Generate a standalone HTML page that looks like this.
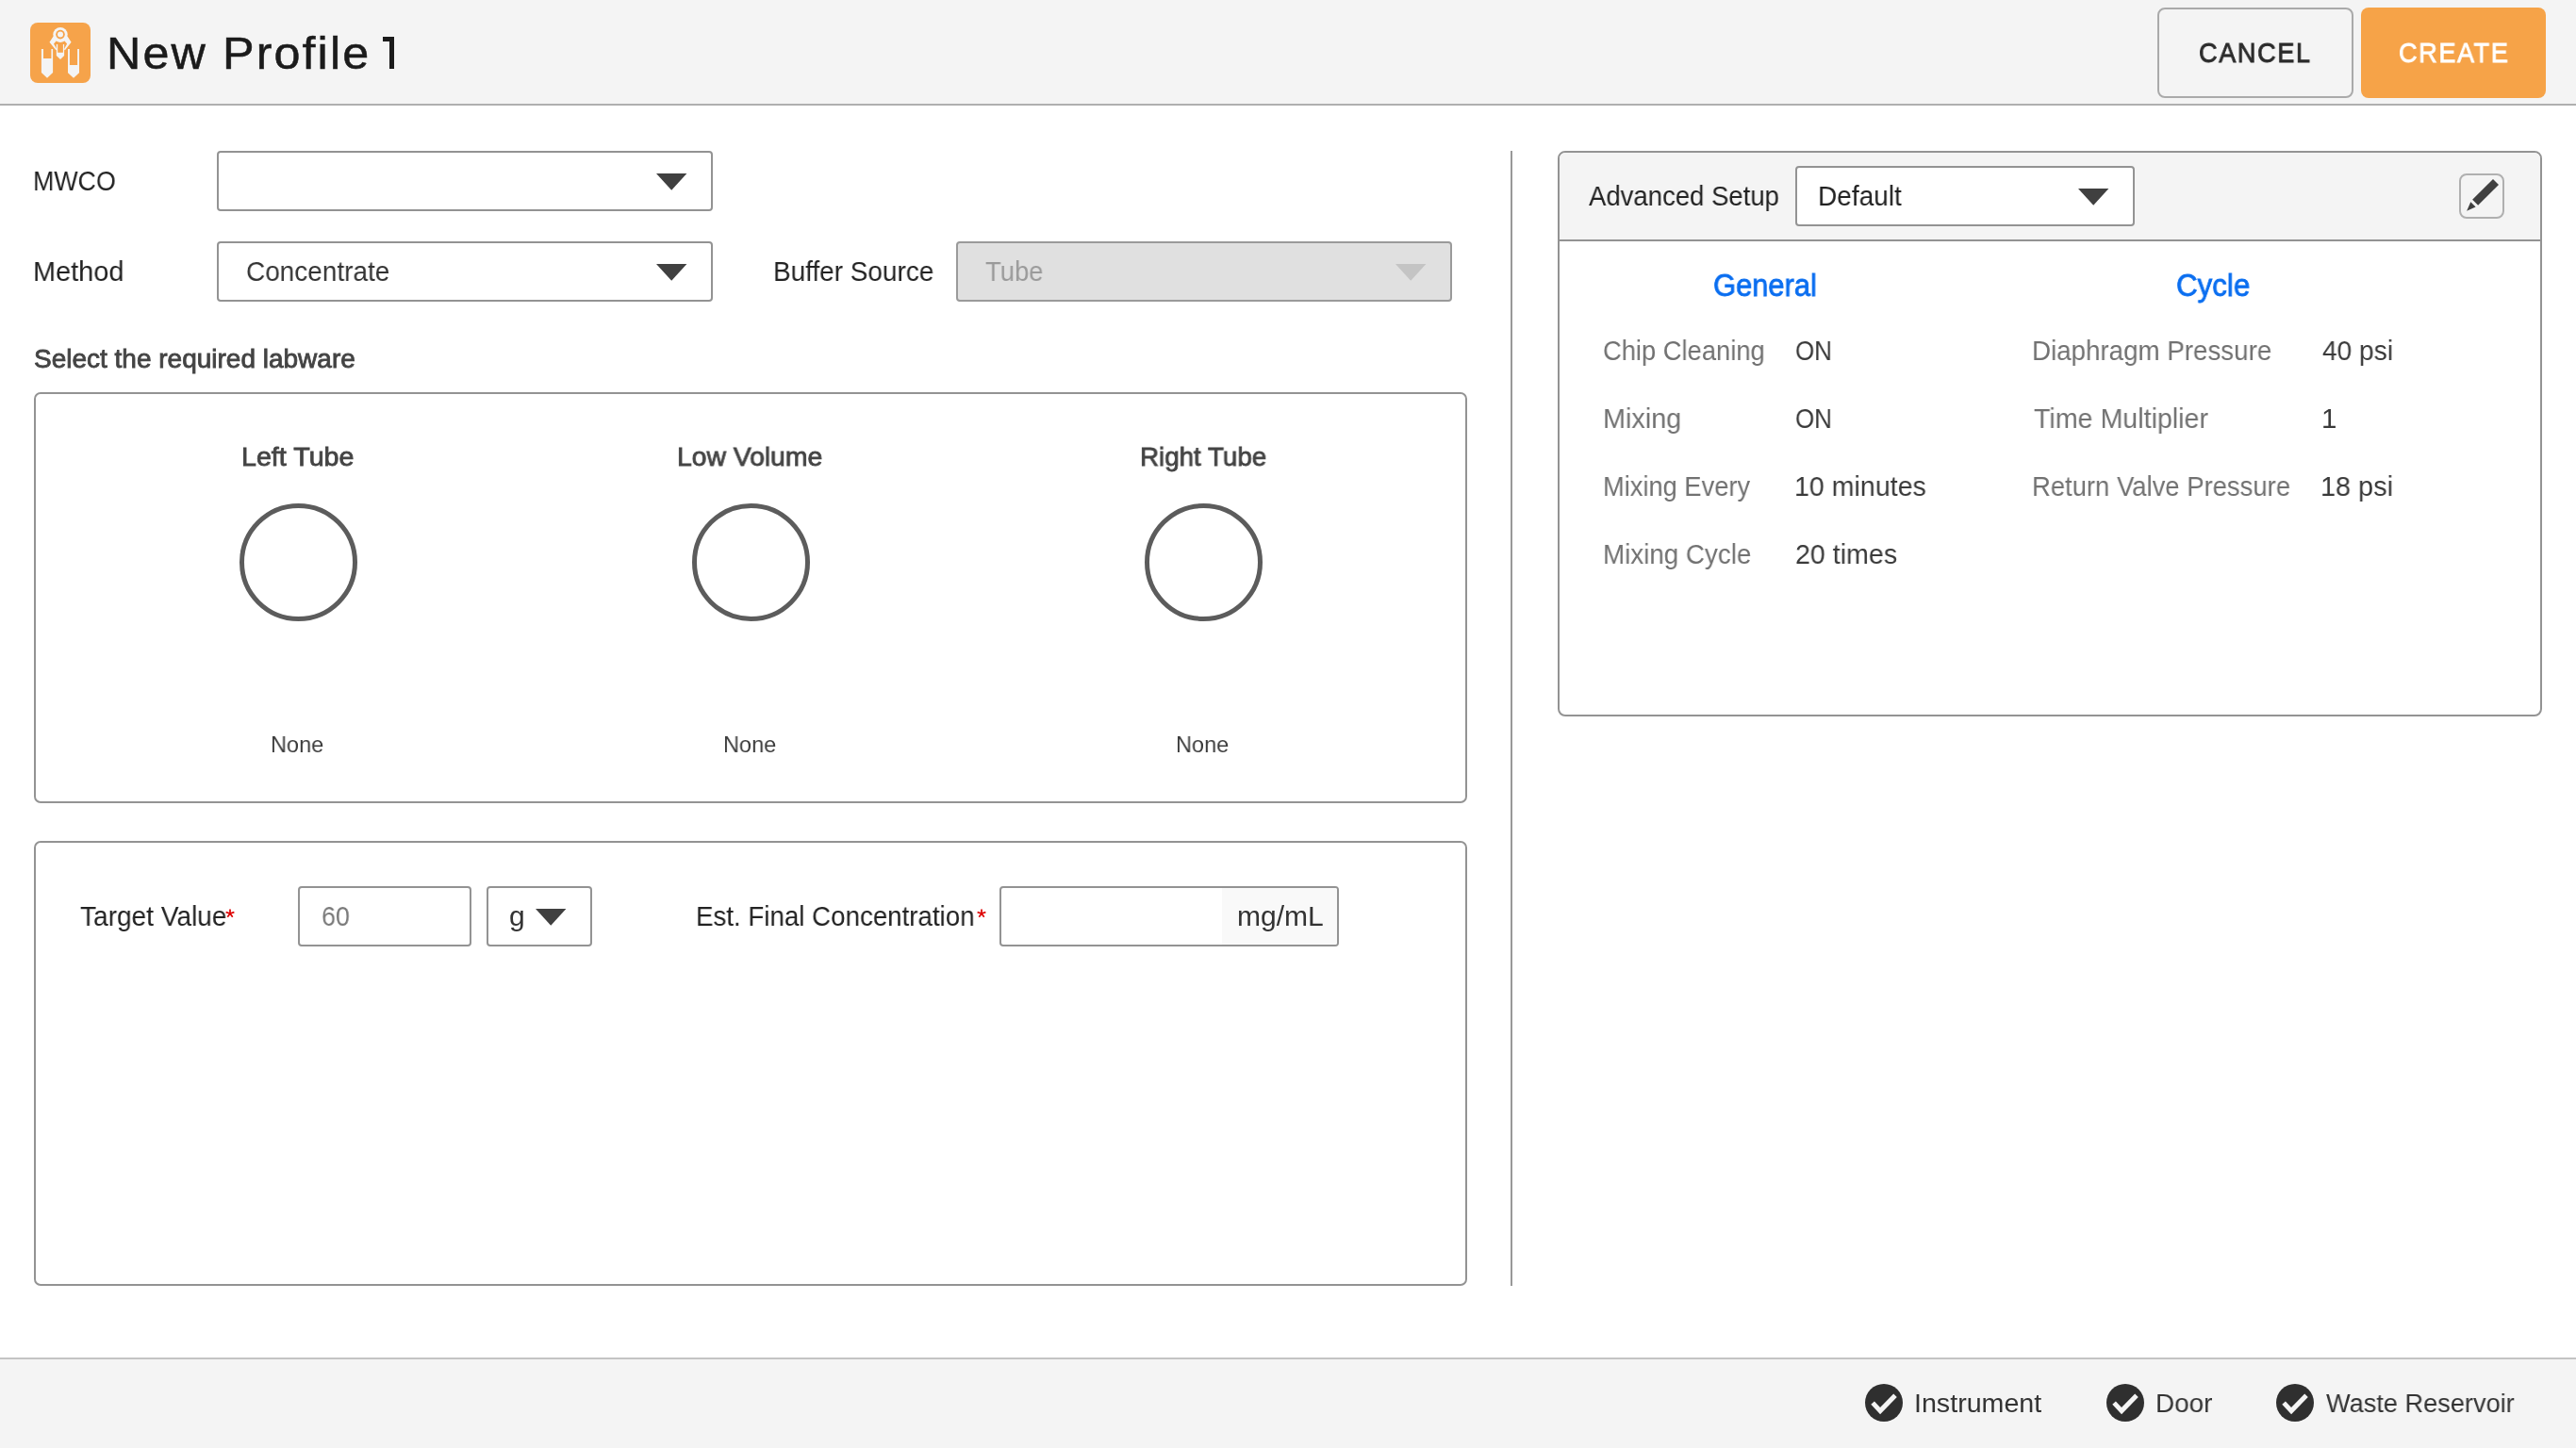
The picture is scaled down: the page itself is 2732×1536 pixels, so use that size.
<!DOCTYPE html>
<html><head><meta charset="utf-8">
<style>
*{box-sizing:border-box;margin:0;padding:0}
html,body{width:2732px;height:1536px;overflow:hidden;background:#fff;font-family:"Liberation Sans",sans-serif;position:relative}
.a{position:absolute}
.t{position:absolute;white-space:nowrap;line-height:1;transform-origin:0 0;will-change:transform}
.pb{display:inline-block;width:0;height:0;vertical-align:baseline}
.box{position:absolute;border:2px solid #939393;border-radius:4px;background:#fff}
</style></head>
<body>
<div class="a" style="left:0;top:0;width:2732px;height:110px;background:#f4f4f4"></div>
<div class="a" style="left:0;top:110px;width:2732px;height:2px;background:#afafaf"></div>
<svg class="a" style="left:32px;top:24px" width="64" height="64" viewBox="0 0 64 64"><rect x="0" y="0" width="64" height="64" rx="8" fill="#f6a34a"/><g fill="#f4f4f4"><path d="M11.9 28 V53 L18 58.8 L24.1 53 V28 H22.4 V37.9 H14 V28 Z"/><path d="M40 28 V53.2 L46 58.8 L52 53.2 V28 H50.1 V45 H41.9 V28 Z"/><path d="M27.8 23 V35.1 L32 38.9 L36.1 35.1 V23 H34.9 V31.8 H29.2 V23 Z"/><path d="M24.6 14.5 L20.5 20.8 L27.3 29.2 L28.3 28.2 L25 22.4 L27.6 19.6 Q32 22.2 36.5 19.6 L39.1 22.4 L35.9 28.2 L36.9 29.2 L43.6 20.8 L39.5 14.5 Z"/><circle cx="32" cy="12.6" r="7.7"/></g><circle cx="32" cy="12.6" r="4.8" fill="#f6a34a"/><circle cx="32" cy="12.6" r="3" fill="#f4f4f4"/></svg>
<div class="a" style="left:2288px;top:8px;width:208px;height:96px;border:2px solid #aaaaaa;border-radius:8px;background:#f4f4f4"></div>
<div class="a" style="left:2504px;top:8px;width:196px;height:96px;border-radius:8px;background:#f6a348"></div>
<div class="a" style="left:405.6px;top:39.2px;width:12.2px;height:4.4px;background:#1b1b1b"></div>
<div class="a" style="left:413.2px;top:39.2px;width:4.6px;height:33.8px;background:#1b1b1b"></div>
<div class="box" style="left:230px;top:160px;width:526px;height:64px"></div>
<svg class="a" style="left:695.9px;top:183.9px" width="33.4" height="18.8" viewBox="0 0 33.4 18.8"><polygon points="0,0 32.4,0 16.2,17.8" fill="#404040"/></svg>
<div class="box" style="left:230px;top:256px;width:526px;height:64px"></div>
<svg class="a" style="left:695.9px;top:279.9px" width="33.4" height="18.8" viewBox="0 0 33.4 18.8"><polygon points="0,0 32.4,0 16.2,17.8" fill="#404040"/></svg>
<div class="box" style="left:1014px;top:256px;width:526px;height:64px;background:#e0e0e0;border-color:#9a9a9a"></div>
<svg class="a" style="left:1479.5px;top:279.9px" width="33.4" height="18.8" viewBox="0 0 33.4 18.8"><polygon points="0,0 32.4,0 16.2,17.8" fill="#c4c4c4"/></svg>
<div class="box" style="left:36px;top:416px;width:1520px;height:436px;border-radius:7px"></div>
<div class="a" style="left:253.5px;top:533.5px;width:125px;height:125px;border:5px solid #5c5c5c;border-radius:50%"></div>
<div class="a" style="left:733.5px;top:533.5px;width:125px;height:125px;border:5px solid #5c5c5c;border-radius:50%"></div>
<div class="a" style="left:1213.5px;top:533.5px;width:125px;height:125px;border:5px solid #5c5c5c;border-radius:50%"></div>
<div class="box" style="left:36px;top:892px;width:1520px;height:472px;border-radius:7px"></div>
<div class="box" style="left:316px;top:940px;width:184px;height:64px"></div>
<div class="box" style="left:516px;top:940px;width:112px;height:64px"></div>
<svg class="a" style="left:567.7px;top:963.9px" width="33.4" height="18.8" viewBox="0 0 33.4 18.8"><polygon points="0,0 32.4,0 16.2,17.8" fill="#404040"/></svg>
<div class="box" style="left:1060px;top:940px;width:360px;height:64px;overflow:hidden"><div class="a" style="left:234px;top:0;width:124px;height:60px;background:#f9f9f9"></div></div>
<div class="a" style="left:1602px;top:160px;width:2px;height:1204px;background:#999999"></div>
<div class="box" style="left:1652px;top:160px;width:1044px;height:600px;border-radius:8px;overflow:hidden"><div class="a" style="left:0;top:0;width:1040px;height:94px;background:#f4f4f4;border-bottom:2px solid #939393"></div></div>
<div class="box" style="left:1904px;top:176px;width:360px;height:64px"></div>
<svg class="a" style="left:2204px;top:200px" width="33.4" height="18.8" viewBox="0 0 33.4 18.8"><polygon points="0,0 32.4,0 16.2,17.8" fill="#404040"/></svg>
<div class="a" style="left:2608px;top:184px;width:48px;height:48px;border:2px solid #b0b0b0;border-radius:8px;background:#f4f4f4"></div>
<svg class="a" style="left:2600px;top:176px" width="64" height="64" viewBox="0 0 64 64"><g fill="#404040"><polygon points="44,14.1 50,20.1 28.1,41.8 22.1,35.8"/><polygon points="20.3,38.2 25.6,43.5 16.1,47.7"/></g></svg>
<svg class="a" style="left:234.3px;top:958.6px" width="20" height="20" viewBox="0 0 20 20"><g stroke="#dd0000" stroke-width="1.7" stroke-linecap="butt"><line x1="10" y1="10" x2="10.00" y2="5.40"/><line x1="10" y1="10" x2="14.37" y2="8.58"/><line x1="10" y1="10" x2="12.70" y2="13.72"/><line x1="10" y1="10" x2="7.30" y2="13.72"/><line x1="10" y1="10" x2="5.63" y2="8.58"/></g></svg>
<svg class="a" style="left:1031.2px;top:958.6px" width="20" height="20" viewBox="0 0 20 20"><g stroke="#dd0000" stroke-width="1.7" stroke-linecap="butt"><line x1="10" y1="10" x2="10.00" y2="5.40"/><line x1="10" y1="10" x2="14.37" y2="8.58"/><line x1="10" y1="10" x2="12.70" y2="13.72"/><line x1="10" y1="10" x2="7.30" y2="13.72"/><line x1="10" y1="10" x2="5.63" y2="8.58"/></g></svg>
<div class="a" style="left:0;top:1440px;width:2732px;height:96px;background:#f4f4f4;border-top:2px solid #c4c4c4"></div>
<div class="a" style="left:1978px;top:1468px;width:40px;height:40px;border-radius:50%;background:#2f2f2f"></div><svg class="a" style="left:1978px;top:1468px" width="40" height="40" viewBox="0 0 40 40"><polyline points="8.1,20.1 16.1,28.6 32,12.2" fill="none" stroke="#f4f4f4" stroke-width="5"/></svg>
<div class="a" style="left:2234px;top:1468px;width:40px;height:40px;border-radius:50%;background:#2f2f2f"></div><svg class="a" style="left:2234px;top:1468px" width="40" height="40" viewBox="0 0 40 40"><polyline points="8.1,20.1 16.1,28.6 32,12.2" fill="none" stroke="#f4f4f4" stroke-width="5"/></svg>
<div class="a" style="left:2414px;top:1468px;width:40px;height:40px;border-radius:50%;background:#2f2f2f"></div><svg class="a" style="left:2414px;top:1468px" width="40" height="40" viewBox="0 0 40 40"><polyline points="8.1,20.1 16.1,28.6 32,12.2" fill="none" stroke="#f4f4f4" stroke-width="5"/></svg>
<div class="t" id="title" style="left:113.36px;top:33.00px;font-size:48px;color:#1b1b1b;transform:scaleX(1.0479);-webkit-text-stroke:0.5px #1b1b1b;letter-spacing:2px"><i class="pb"></i>New Profile</div>
<div class="t" id="cancel" style="left:2332.20px;top:41.00px;font-size:30px;color:#2b2b2b;transform:scaleX(0.9031);-webkit-text-stroke:0.85px #2b2b2b;letter-spacing:1.8px"><i class="pb"></i>CANCEL</div>
<div class="t" id="create" style="left:2544.10px;top:41.00px;font-size:30px;color:#ffffff;transform:scaleX(0.9016);-webkit-text-stroke:0.85px #ffffff;letter-spacing:1.8px"><i class="pb"></i>CREATE</div>
<div class="t" id="mwco" style="left:35.31px;top:177.00px;font-size:30px;color:#222222;transform:scaleX(0.8926)"><i class="pb"></i>MWCO</div>
<div class="t" id="method" style="left:35.17px;top:273.00px;font-size:30px;color:#222222;transform:scaleX(0.9629)"><i class="pb"></i>Method</div>
<div class="t" id="conc" style="left:261.17px;top:273.00px;font-size:30px;color:#333333;transform:scaleX(0.9317)"><i class="pb"></i>Concentrate</div>
<div class="t" id="buf" style="left:819.94px;top:273.00px;font-size:30px;color:#222222;transform:scaleX(0.9311)"><i class="pb"></i>Buffer Source</div>
<div class="t" id="tube" style="left:1044.90px;top:273.00px;font-size:30px;color:#9a9a9a;transform:scaleX(0.9136)"><i class="pb"></i>Tube</div>
<div class="t" id="select" style="left:36.29px;top:367.00px;font-size:27.8px;color:#444444;transform:scaleX(1.0071);-webkit-text-stroke:0.85px #444444"><i class="pb"></i>Select the required labware</div>
<div class="t" id="lt" style="left:255.89px;top:470.00px;font-size:28.5px;color:#444444;transform:scaleX(1.0052);-webkit-text-stroke:0.85px #444444"><i class="pb"></i>Left Tube</div>
<div class="t" id="lv" style="left:718.41px;top:470.00px;font-size:28.5px;color:#444444;transform:scaleX(0.9928);-webkit-text-stroke:0.85px #444444"><i class="pb"></i>Low Volume</div>
<div class="t" id="rt" style="left:1208.95px;top:470.00px;font-size:28.5px;color:#444444;transform:scaleX(0.9733);-webkit-text-stroke:0.85px #444444"><i class="pb"></i>Right Tube</div>
<div class="t" id="n1" style="left:287.47px;top:778.00px;font-size:24.4px;color:#3c3c3c;transform:scaleX(0.9643)"><i class="pb"></i>None</div>
<div class="t" id="n2" style="left:767.47px;top:778.00px;font-size:24.4px;color:#3c3c3c;transform:scaleX(0.9643)"><i class="pb"></i>None</div>
<div class="t" id="n3" style="left:1247.47px;top:778.00px;font-size:24.4px;color:#3c3c3c;transform:scaleX(0.9643)"><i class="pb"></i>None</div>
<div class="t" id="tv" style="left:84.70px;top:957.00px;font-size:30px;color:#222222;transform:scaleX(0.9352)"><i class="pb"></i>Target Value</div>
<div class="t" id="sixty" style="left:340.51px;top:957.00px;font-size:30px;color:#7a7a7a;transform:scaleX(0.8938)"><i class="pb"></i>60</div>
<div class="t" id="g" style="left:540.00px;top:957.00px;font-size:30px;color:#333333;transform:scaleX(1.0000)"><i class="pb"></i>g</div>
<div class="t" id="est" style="left:737.75px;top:957.00px;font-size:30px;color:#222222;transform:scaleX(0.9233)"><i class="pb"></i>Est. Final Concentration</div>
<div class="t" id="mgml" style="left:1311.80px;top:957.00px;font-size:30px;color:#333333;transform:scaleX(1.0011)"><i class="pb"></i>mg/mL</div>
<div class="t" id="adv" style="left:1684.70px;top:193.00px;font-size:29.5px;color:#222222;transform:scaleX(0.9326)"><i class="pb"></i>Advanced Setup</div>
<div class="t" id="def" style="left:1927.70px;top:193.00px;font-size:29.5px;color:#222222;transform:scaleX(0.9500)"><i class="pb"></i>Default</div>
<div class="t" id="gen" style="left:1817.26px;top:286.00px;font-size:33px;color:#0a6ef0;transform:scaleX(0.9357);-webkit-text-stroke:0.8px #0a6ef0"><i class="pb"></i>General</div>
<div class="t" id="cyc" style="left:2308.05px;top:286.00px;font-size:33px;color:#0a6ef0;transform:scaleX(0.9481);-webkit-text-stroke:0.8px #0a6ef0"><i class="pb"></i>Cycle</div>
<div class="t" id="r1l" style="left:1700.27px;top:357.00px;font-size:29.4px;color:#717171;transform:scaleX(0.9302)"><i class="pb"></i>Chip Cleaning</div>
<div class="t" id="r1v" style="left:1904.31px;top:357.00px;font-size:29.4px;color:#3a3a3a;transform:scaleX(0.8854)"><i class="pb"></i>ON</div>
<div class="t" id="r2l" style="left:1700.04px;top:429.00px;font-size:29.4px;color:#717171;transform:scaleX(0.9802)"><i class="pb"></i>Mixing</div>
<div class="t" id="r2v" style="left:1904.31px;top:429.00px;font-size:29.4px;color:#3a3a3a;transform:scaleX(0.8854)"><i class="pb"></i>ON</div>
<div class="t" id="r3l" style="left:1700.14px;top:501.00px;font-size:29.4px;color:#717171;transform:scaleX(0.9277)"><i class="pb"></i>Mixing Every</div>
<div class="t" id="r3v" style="left:1903.25px;top:501.00px;font-size:29.4px;color:#3a3a3a;transform:scaleX(0.9730)"><i class="pb"></i>10 minutes</div>
<div class="t" id="r4l" style="left:1700.11px;top:573.00px;font-size:29.4px;color:#717171;transform:scaleX(0.9445)"><i class="pb"></i>Mixing Cycle</div>
<div class="t" id="r4v" style="left:1904.23px;top:573.00px;font-size:29.4px;color:#3a3a3a;transform:scaleX(0.9734)"><i class="pb"></i>20 times</div>
<div class="t" id="c1l" style="left:2154.91px;top:357.00px;font-size:29.4px;color:#717171;transform:scaleX(0.9431)"><i class="pb"></i>Diaphragm Pressure</div>
<div class="t" id="c1v" style="left:2463.00px;top:357.00px;font-size:29.4px;color:#3a3a3a;transform:scaleX(0.9558)"><i class="pb"></i>40 psi</div>
<div class="t" id="c2l" style="left:2156.80px;top:429.00px;font-size:29.4px;color:#717171;transform:scaleX(0.9737)"><i class="pb"></i>Time Multiplier</div>
<div class="t" id="c2v" style="left:2461.60px;top:429.00px;font-size:29.4px;color:#3a3a3a;transform:scaleX(1.0000)"><i class="pb"></i>1</div>
<div class="t" id="c3l" style="left:2154.93px;top:501.00px;font-size:29.4px;color:#717171;transform:scaleX(0.9337)"><i class="pb"></i>Return Valve Pressure</div>
<div class="t" id="c3v" style="left:2461.04px;top:501.00px;font-size:29.4px;color:#3a3a3a;transform:scaleX(0.9813)"><i class="pb"></i>18 psi</div>
<div class="t" id="f1" style="left:2029.78px;top:1474.00px;font-size:28.4px;color:#333333;transform:scaleX(1.0083)"><i class="pb"></i>Instrument</div>
<div class="t" id="f2" style="left:2285.53px;top:1474.00px;font-size:28.4px;color:#333333;transform:scaleX(0.9831)"><i class="pb"></i>Door</div>
<div class="t" id="f3" style="left:2467.00px;top:1474.00px;font-size:28.4px;color:#333333;transform:scaleX(0.9569)"><i class="pb"></i>Waste Reservoir</div>
</body></html>
